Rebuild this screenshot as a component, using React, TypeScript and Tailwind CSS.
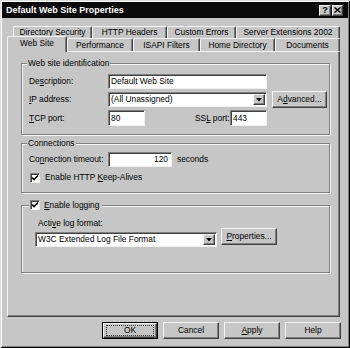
import React from "react";

const raised =
  "border border-t-[#f4f4f4] border-l-[#f4f4f4] border-r-[#404040] border-b-[#404040] shadow-[inset_-1px_-1px_0_#808080]";
const sunken =
  "border border-t-[#808080] border-l-[#808080] border-r-[#f0f0f0] border-b-[#f0f0f0] shadow-[inset_1px_1px_0_#404040] bg-white";

function U({ children }: { children: React.ReactNode }) {
  return <span className="underline underline-offset-1 decoration-[1px]">{children}</span>;
}

function Tab({ label, w, selected }: { label: string; w: number; selected?: boolean }) {
  return (
    <div
      style={{ width: w }}
      className={
        "flex items-center justify-center border-t border-l border-r border-t-[#f4f4f4] border-l-[#f4f4f4] border-r-[#404040] rounded-t-[2px] shadow-[inset_-1px_0_0_#808080] bg-[#c6c6c6] " +
        (selected ? "h-[16px] mb-[-1px] relative z-10 pb-[2px]" : "h-full")
      }
    >
      {label}
    </div>
  );
}

function Check() {
  return (
    <div className={sunken + " w-[10px] h-[10px] flex items-center justify-center shrink-0"}>
      <svg width="8" height="8" viewBox="0 0 8 8">
        <path d="M1 3.5 L3 5.5 L7 1.5" stroke="#000" strokeWidth="1.6" fill="none" />
      </svg>
    </div>
  );
}

function Combo({ w, text }: { w: number; text: string }) {
  return (
    <div style={{ width: w }} className={sunken + " h-[15px] flex items-center justify-between pl-[2px] pr-[1px]"}>
      <span className="leading-none">{text}</span>
      <div className={raised + " w-[12px] h-[11px] bg-[#c6c6c6] flex items-center justify-center"}>
        <svg width="6" height="4" viewBox="0 0 6 4">
          <path d="M0 0 H6 L3 3.5 Z" fill="#000" />
        </svg>
      </div>
    </div>
  );
}

function Btn({ children, w, def }: { children: React.ReactNode; w: number; def?: boolean }) {
  if (def) {
    return (
      <div style={{ width: w }} className="h-[17px] border border-black">
        <div className={raised + " w-full h-full px-[2px] py-[1px]"}>
          <div className="w-full h-full border border-dotted border-[#333] flex items-center justify-center">{children}</div>
        </div>
      </div>
    );
  }
  return (
    <div style={{ width: w }} className={raised + " h-[17px] flex items-center justify-center"}>
      {children}
    </div>
  );
}

function Group({
  legend,
  h,
  mt,
  legendLeft,
  children,
}: {
  legend: React.ReactNode;
  h: number;
  mt: number;
  legendLeft: number;
  children: React.ReactNode;
}) {
  return (
    <div
      style={{ height: h, marginTop: mt }}
      className="relative ml-[13px] w-[309px] border border-[#808080] shadow-[inset_1px_1px_0_#f4f4f4,1px_1px_0_#f4f4f4]"
    >
      <div style={{ left: legendLeft }} className="absolute -top-[7px] bg-[#c6c6c6] px-[1px] flex items-center h-[12px]">
        {legend}
      </div>
      {children}
    </div>
  );
}

export default function App() {
  return (
    <div className="w-[350px] h-[348px] bg-[#c6c6c6] text-black text-[8.4px] leading-none font-['Liberation_Sans',Arial,sans-serif] shadow-[inset_1px_1px_0_#dcdcdc,inset_-1px_-1px_0_#000,inset_2px_2px_0_#fff,inset_-2px_-2px_0_#808080] overflow-hidden flex flex-col">
      {/* Title bar */}
      <div className="mx-[2px] mt-[2px] h-[16px] bg-[#0a0a0a] flex items-center justify-between pl-[4px] pr-[5px]">
        <span className="text-white font-bold text-[9px]">Default Web Site Properties</span>
        <div className="flex gap-[1px]">
          <div className={raised + " w-[12px] h-[11px] bg-[#c6c6c6] flex items-center justify-center font-bold text-[9px]"}>?</div>
          <div className={raised + " w-[11px] h-[11px] bg-[#c6c6c6] flex items-center justify-center"}>
            <svg width="7" height="6" viewBox="0 0 7 6">
              <path d="M0.5 0.5 L6.5 5.5 M6.5 0.5 L0.5 5.5" stroke="#000" strokeWidth="1.4" />
            </svg>
          </div>
        </div>
      </div>

      {/* Tabs row 1 */}
      <div className="ml-[13px] mt-[8px] h-[12px] flex">
        <Tab label="Directory Security" w={79} />
        <Tab label="HTTP Headers" w={75} />
        <Tab label="Custom Errors" w={69} />
        <Tab label="Server Extensions 2002" w={104} />
      </div>
      {/* Tabs row 2 */}
      <div className="ml-[7px] h-[13px] flex items-end">
        <Tab label="Web Site" w={60} selected />
        <Tab label="Performance" w={66} />
        <Tab label="ISAPI Filters" w={67} />
        <Tab label="Home Directory" w={75} />
        <Tab label="Documents" w={65} />
      </div>

      {/* Panel */}
      <div className="ml-[7px] w-[333px] h-[266px] border border-t-[#f4f4f4] border-l-[#f4f4f4] border-r-[#404040] border-b-[#404040] shadow-[inset_-1px_-1px_0_#808080] flex flex-col">
        <Group legend={<span>Web site identification</span>} h={72} mt={11} legendLeft={5}>
          <div className="pl-[7px] pt-[10px] flex flex-col">
            <div className="flex items-center h-[15px]">
              <span className="w-[79px]">De<U>s</U>cription:</span>
              <div className={sunken + " w-[159px] h-[15px] flex items-center pl-[2px]"}>Default Web Site</div>
            </div>
            <div className="flex items-center h-[17px] mt-[2px]">
              <span className="w-[79px]"><U>I</U>P address:</span>
              <Combo w={159} text="(All Unassigned)" />
              <div className="ml-[5px]">
                <Btn w={55}>A<U>d</U>vanced...</Btn>
              </div>
            </div>
            <div className="flex items-center h-[16px] mt-[2px]">
              <span className="w-[79px]"><U>T</U>CP port:</span>
              <div className={sunken + " w-[37px] h-[16px] flex items-center pl-[2px]"}>80</div>
              <span className="ml-[50px] w-[35px]">SS<U>L</U> port:</span>
              <div className={sunken + " w-[37px] h-[16px] flex items-center pl-[2px]"}>443</div>
            </div>
          </div>
        </Group>

        <Group legend={<span>Connections</span>} h={50} mt={8} legendLeft={5}>
          <div className="pl-[7px] pt-[8px] flex flex-col">
            <div className="flex items-center h-[15px]">
              <span className="w-[79px]">Co<U>n</U>nection timeout:</span>
              <div className={sunken + " w-[64px] h-[15px] flex items-center justify-end pr-[3px]"}>120</div>
              <span className="ml-[5px]">seconds</span>
            </div>
            <div className="flex items-center h-[11px] mt-[5px] ml-[1px]">
              <Check />
              <span className="ml-[5px]">Enable HTTP <U>K</U>eep-Alives</span>
            </div>
          </div>
        </Group>

        <Group
          legend={
            <>
              <Check />
              <span className="ml-[4px] pr-[2px]"><U>E</U>nable logging</span>
            </>
          }
          h={68}
          mt={12}
          legendLeft={7}
        >
          <div className="pl-[13px] pt-[12px] flex flex-col">
            <div className="h-[10px] pl-[3px] flex items-center">Acti<U>v</U>e log format:</div>
            <div className="flex items-start">
              <div className="mt-[4px]">
                <Combo w={182} text="W3C Extended Log File Format" />
              </div>
              <div className="ml-[4px]">
                <Btn w={56}><U>P</U>roperties...</Btn>
              </div>
            </div>
          </div>
        </Group>
      </div>

      {/* Bottom buttons */}
      <div className="ml-[102px] mt-[5px] flex gap-[5px]">
        <Btn w={56} def>OK</Btn>
        <Btn w={56}>Cancel</Btn>
        <Btn w={56}><U>A</U>pply</Btn>
        <Btn w={56}>Help</Btn>
      </div>
    </div>
  );
}
